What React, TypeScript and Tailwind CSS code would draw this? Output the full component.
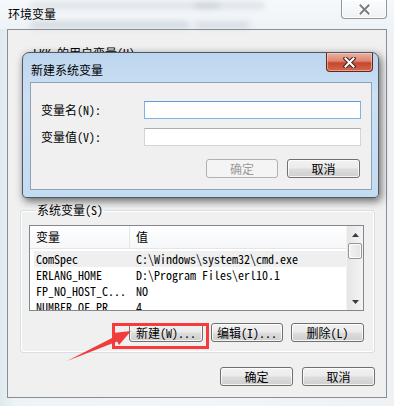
import React from "react";

function XGlyph({ outline, fill }: { outline: string; fill: string }) {
  return (
    <svg width="13" height="11" viewBox="0 0 13 11">
      <path d="M2.5 1.5 L10.5 9.5 M10.5 1.5 L2.5 9.5" stroke={outline} strokeWidth="4.2" strokeLinecap="square" fill="none" />
      <path d="M2.5 1.5 L10.5 9.5 M10.5 1.5 L2.5 9.5" stroke={fill} strokeWidth="2" strokeLinecap="square" fill="none" />
    </svg>
  );
}

function Btn({ children, className, disabled }: { children: React.ReactNode; className: string; disabled?: boolean }) {
  return (
    <div
      className={
        "flex h-[19px] shrink-0 items-center justify-center rounded-[3px] border leading-[12px] " +
        (disabled
          ? "border-[#adb2b5] bg-[#f4f4f4] text-[#9a9a9a] "
          : "border-[#707070] bg-[linear-gradient(#f2f2f2_0%,#ebebeb_48%,#dddddd_52%,#cfcfcf_100%)] text-black shadow-[inset_0_0_0_1px_rgba(255,255,255,0.75)] ") +
        className
      }
    >
      {children}
    </div>
  );
}

const rows: [string, string][] = [
  ["ComSpec", "C:\\Windows\\system32\\cmd.exe"],
  ["ERLANG_HOME", "D:\\Program Files\\erl10.1"],
  ["FP_NO_HOST_C...", "NO"],
  ["NUMBER_OF_PR", "4"],
];

export default function App() {
  return (
    <div className="relative h-[406px] w-[394px] overflow-hidden bg-[linear-gradient(90deg,#dfeaee_0%,#eef3f6_4%,#f3f6f8_50%,#eef2f5_100%)] font-['Noto_Sans_Mono_CJK_SC','Noto_Sans_CJK_SC',sans-serif] text-[12px] leading-[12px] text-black">
      {/* outer title bar */}
      <div className="relative flex h-[29px] items-start bg-[linear-gradient(#f6f9fb,#eef3f7)]">
        <div className="absolute left-[30px] top-[3px] h-[5px] w-[190px] rounded-full bg-[#8f9aa5] opacity-30 blur-[3px]" />
        <div className="absolute left-[195px] top-[3px] h-[5px] w-[70px] rounded-full bg-[#8f9aa5] opacity-30 blur-[3px]" />
        <div className="absolute left-[30px] top-[22px] h-[6px] w-[160px] rounded-full bg-[#8f9aa5] opacity-35 blur-[3px]" />
        <div className="absolute left-[195px] top-[22px] h-[6px] w-[55px] rounded-full bg-[#8f9aa5] opacity-30 blur-[3px]" />
        <div className="relative pl-[8px] pt-[8px]">环境变量</div>
        <div className="relative ml-auto mr-[7px] flex h-[19px] w-[46px] items-center justify-center rounded-b-[4px] border border-t-0 border-[#8e959c] bg-[linear-gradient(#fbfcfd,#eef2f5)] shadow-[inset_0_0_0_1px_rgba(255,255,255,0.9)]">
          <XGlyph outline="#ffffff" fill="#7a7e83" />
        </div>
      </div>

      {/* outer panel */}
      <div className="mx-[7px] flex h-[369px] flex-col border border-[#8a8d91] bg-[#f0f0f0] pl-[12px] pr-[11px]">
        <div className="h-[174px] shrink-0 pl-[13px] pt-[17px]">LKK 的用户变量(U)</div>

        <fieldset className="rounded-[3px] border border-[#d5dfe5] pb-[10px] pl-[8px] pr-[10px] shadow-[inset_0_0_0_1px_#ffffff]">
          <legend className="ml-[7px] px-[1px] leading-[12px]">系统变量(S)</legend>
          <div className="mt-[9px] flex h-[86px] overflow-hidden border border-[#828790] bg-white">
            <div className="flex-1 overflow-hidden">
              <div className="flex h-[23px] border-b border-[#e5e5e5] bg-[linear-gradient(#ffffff,#f6f7f9)]">
                <div className="flex w-[100px] items-center border-r border-[#e3e6ea] pl-[6px]">变量</div>
                <div className="flex items-center pl-[6px]">值</div>
              </div>
              <div className="pt-[2px]">
                {rows.map(([k, v], i) => (
                  <div key={k} className={"ml-[4px] flex h-[16px] items-center " + (i === 0 ? "bg-[#efefef]" : "")}>
                    <div className="w-[96px] pl-[2px] whitespace-pre">{k}</div>
                    <div className="pl-[6px] whitespace-pre">{v}</div>
                  </div>
                ))}
              </div>
            </div>
            <div className="flex w-[17px] flex-col border-l border-[#f3f3f3] bg-[linear-gradient(90deg,#e6e6e6,#f4f4f4)]">
              <div className="flex h-[17px] items-center justify-center">
                <svg width="7" height="4" viewBox="0 0 7 4"><path d="M3.5 0 L7 4 L0 4 Z" fill="#3c3c3c" /></svg>
              </div>
              <div className="mx-[1px] h-[16px] rounded-[2px] border border-[#979797] bg-[linear-gradient(90deg,#f2f2f2,#e4e4e4)] shadow-[inset_0_0_0_1px_rgba(255,255,255,0.8)]" />
              <div className="flex-1" />
              <div className="flex h-[17px] items-center justify-center">
                <svg width="7" height="4" viewBox="0 0 7 4"><path d="M0 0 L7 0 L3.5 4 Z" fill="#3c3c3c" /></svg>
              </div>
            </div>
          </div>
          <div className="mt-[12px] flex justify-end gap-[8px]">
            <Btn className="w-[74px]">新建(W)...</Btn>
            <Btn className="w-[72px]">编辑(I)...</Btn>
            <Btn className="w-[73px]">删除(L)</Btn>
          </div>
        </fieldset>

        <div className="mt-[14px] flex justify-end gap-[9px]">
          <Btn className="w-[73px]">确定</Btn>
          <Btn className="w-[73px]">取消</Btn>
        </div>
      </div>

      {/* dialog: 新建系统变量 */}
      <div className="absolute left-[22px] top-[52px] flex h-[146px] w-[357px] flex-col rounded-t-[7px] rounded-b-[4px] border border-[#4e5966] bg-[linear-gradient(#bcd5ee_0%,#cde0f4_30%,#c4dbf1_100%)] shadow-[2px_3px_8px_rgba(0,0,0,0.6)]">
        <div className="flex h-[29px] shrink-0 items-start">
          <div className="pl-[8px] pt-[11px]">新建系统变量</div>
          <div className="ml-auto mr-[5px] flex h-[19px] w-[47px] items-center justify-center rounded-b-[4px] border border-t-0 border-[#6a2419] bg-[linear-gradient(#eab1a4_0%,#dd8570_45%,#c7452b_55%,#cf6a4f_100%)] shadow-[inset_0_0_0_1px_rgba(255,220,210,0.5)]">
            <XGlyph outline="#4a2a24" fill="#ffffff" />
          </div>
        </div>
        <div className="mb-[7px] ml-[7px] mr-[6px] flex flex-1 flex-col border border-[#8ea3b8] bg-[#f0f0f0] pl-[10px] pr-[10px] pt-[18px]">
          <div className="flex items-center">
            <div className="w-[103px]">变量名(N):</div>
            <div className="h-[18px] w-[217px] border border-[#7fb2e5] border-t-[#5e9bd6] bg-white" />
          </div>
          <div className="mt-[9px] flex items-center">
            <div className="w-[103px]">变量值(V):</div>
            <div className="h-[18px] w-[217px] border border-[#d2d4d7] border-t-[#abadb3] bg-white" />
          </div>
          <div className="mr-[1px] mt-[13px] flex justify-end gap-[9px]">
            <Btn className="w-[72px]" disabled>确定</Btn>
            <Btn className="w-[73px]">取消</Btn>
          </div>
        </div>
      </div>

      {/* annotation: red box + arrow */}
      <div className="absolute left-[112px] top-[323px] h-[26px] w-[97px] border-[3px] border-[#f93a3a]" />
      <svg className="absolute left-0 top-0" width="394" height="406" viewBox="0 0 394 406">
        <polygon points="67,361 115,336.6 113,333 131,331 119,345 117.2,341.4" fill="#f03c3c" />
      </svg>
    </div>
  );
}
